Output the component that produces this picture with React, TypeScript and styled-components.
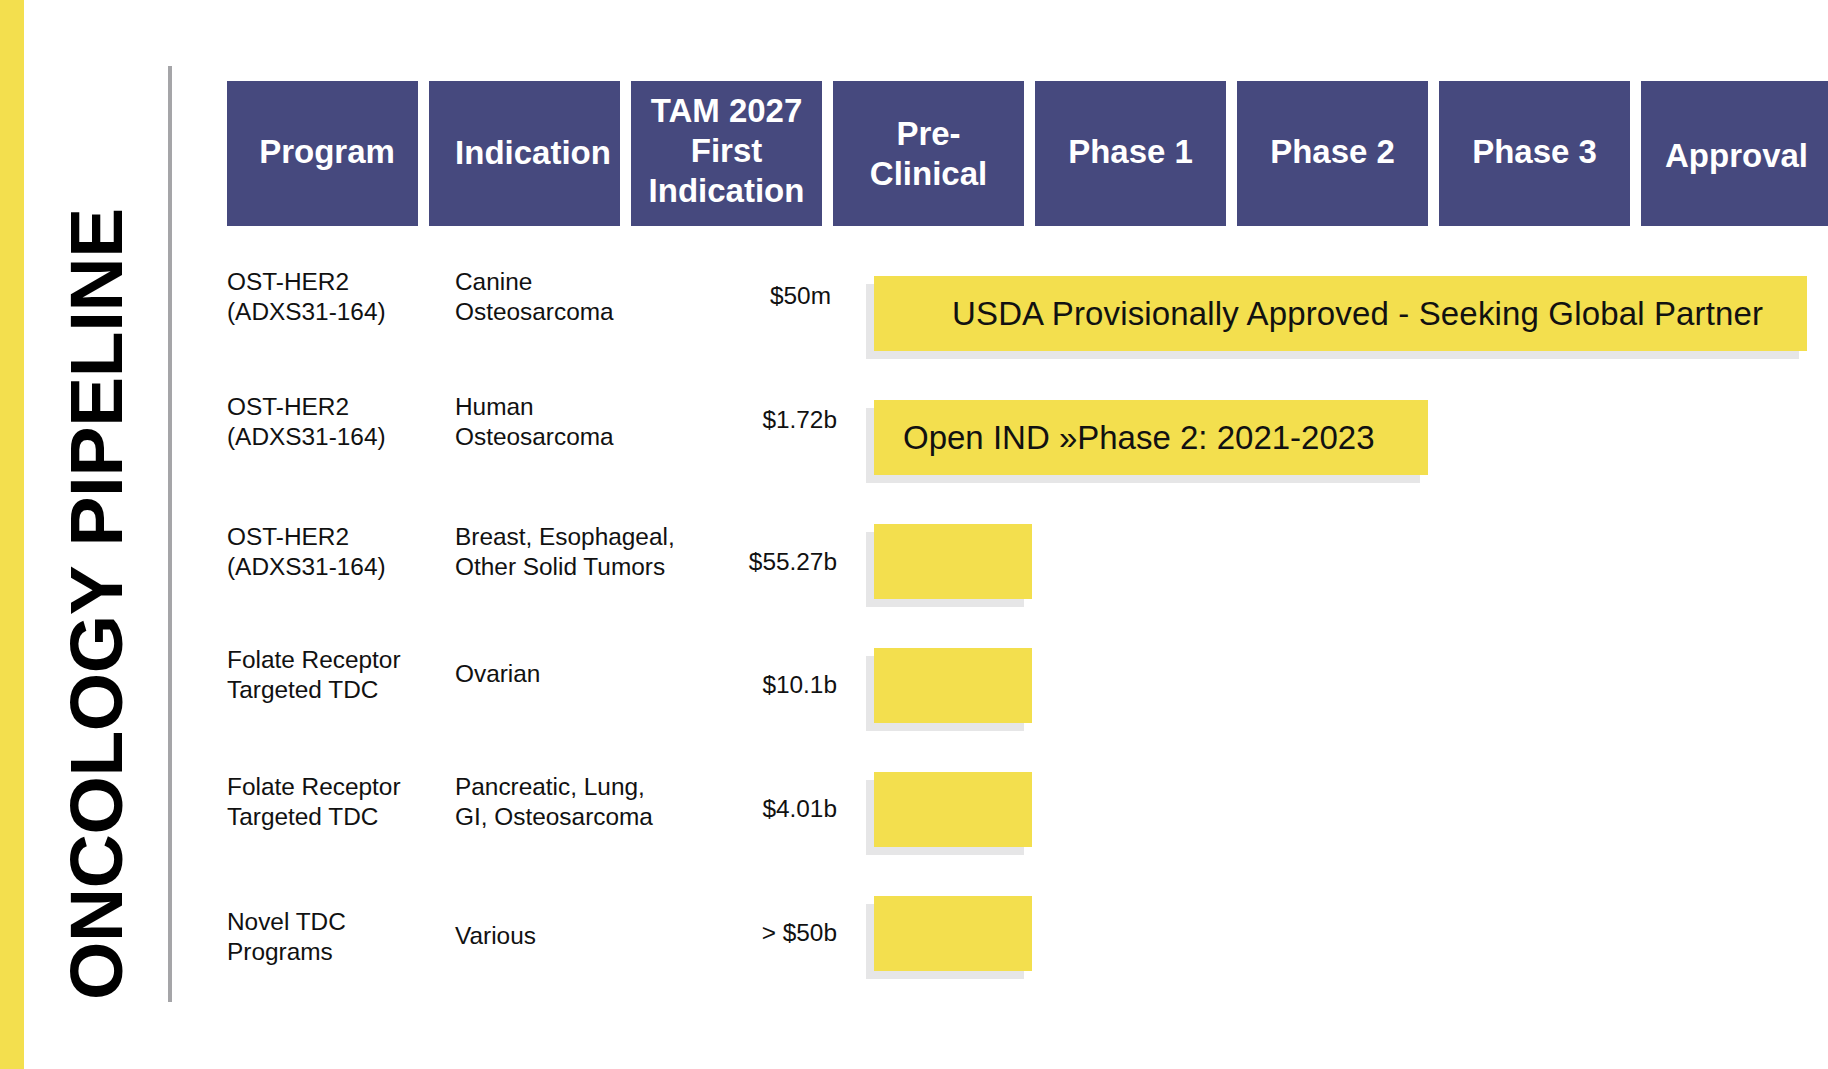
import styled, { createGlobalStyle } from "styled-components";

const GlobalStyle = createGlobalStyle`
  html, body {
    margin: 0;
    padding: 0;
    background: #ffffff;
  }
  body {
    font-family: "Liberation Sans", Arial, Helvetica, sans-serif;
    color: #111111;
  }
`;

const YELLOW = "#f3df4e";
const NAVY = "#46497e";

const Page = styled.div`
  width: 1828px;
  height: 1069px;
  display: flex;
  overflow: hidden;
  background: #ffffff;
`;

const Strip = styled.div`
  width: 24px;
  flex-shrink: 0;
  background: ${YELLOW};
`;

const TitleCol = styled.div`
  width: 144px;
  flex-shrink: 0;
  display: flex;
  align-items: flex-end;
  justify-content: center;
  padding-bottom: 69px;
  box-sizing: border-box;
`;

const Title = styled.h1`
  margin: 0;
  writing-mode: vertical-rl;
  transform: rotate(180deg);
  font-size: 75px;
  line-height: 75px;
  font-weight: 700;
  letter-spacing: -0.4px;
  color: #000000;
  white-space: nowrap;
`;

const Divider = styled.div`
  width: 4px;
  flex-shrink: 0;
  margin-top: 66px;
  height: 936px;
  background: #a5a5a8;
`;

const Main = styled.div`
  flex: 1;
  padding: 81px 0 0 55px;
  display: flex;
  flex-direction: column;
  gap: 40px;
`;

const HeaderRow = styled.div`
  display: flex;
  gap: 11px;
`;

const HeadCell = styled.div<{ $dy?: number; $dx?: number }>`
  width: 191px;
  height: 145px;
  flex-shrink: 0;
  box-sizing: border-box;
  padding-top: ${(p) => Math.max((p.$dy ?? 0) * 2, 0)}px;
  padding-bottom: ${(p) => Math.max(-(p.$dy ?? 0) * 2, 0)}px;
  padding-left: ${(p) => (p.$dx ?? 0) * 2}px;
  background: ${NAVY};
  color: #ffffff;
  font-size: 33px;
  font-weight: 700;
  line-height: 40px;
  display: flex;
  align-items: center;
  justify-content: center;
  text-align: center;
  white-space: nowrap;
`;

const Rows = styled.div`
  display: flex;
  flex-direction: column;
`;

const Row = styled.div`
  height: 124px;
  display: grid;
  grid-template-columns: 228px 220px 162px 1fr;
  align-items: start;
`;

const Cell = styled.div<{ $top: number; $right?: boolean; $pr?: number }>`
  margin-top: ${(p) => p.$top}px;
  padding-right: ${(p) => p.$pr ?? 0}px;
  font-size: 24.4px;
  line-height: 30px;
  white-space: nowrap;
  text-align: ${(p) => (p.$right ? "right" : "left")};
`;

const Bar = styled.div<{ $width: number; $pad: number; $track: number }>`
  margin: 10px 0 0 37px;
  width: ${(p) => p.$width}px;
  height: 75px;
  box-sizing: border-box;
  padding-left: ${(p) => p.$pad}px;
  background: ${YELLOW};
  box-shadow: -8px 8px 0 #e6e6e7;
  display: flex;
  align-items: center;
  font-size: 33px;
  letter-spacing: ${(p) => p.$track}px;
  white-space: nowrap;
  color: #111111;
`;

type PipelineRow = {
  program: string[];
  indication: string[];
  tam: string;
  progTop: number;
  indTop: number;
  tamTop: number;
  tamPad?: number;
  bar: number;
  label?: string;
  pad?: number;
  track?: number;
};

const heads: { lines: string[]; dy?: number; dx?: number }[] = [
  { lines: ["Program"], dy: -2, dx: 4.5 },
  { lines: ["Indication"], dy: -1, dx: 8.5 },
  { lines: ["TAM 2027", "First", "Indication"], dy: -2.5 },
  { lines: ["Pre-", "Clinical"] },
  { lines: ["Phase 1"], dy: -2 },
  { lines: ["Phase 2"], dy: -2 },
  { lines: ["Phase 3"], dy: -2 },
  { lines: ["Approval"], dy: 2.5 },
];

const rows: PipelineRow[] = [
  {
    program: ["OST-HER2", "(ADXS31-164)"],
    indication: ["Canine", "Osteosarcoma"],
    tam: "$50m",
    progTop: 1,
    indTop: 1,
    tamTop: 15,
    tamPad: 6,
    bar: 933,
    label: "USDA Provisionally Approved - Seeking Global Partner",
    pad: 78,
    track: 0.15,
  },
  {
    program: ["OST-HER2", "(ADXS31-164)"],
    indication: ["Human", "Osteosarcoma"],
    tam: "$1.72b",
    progTop: 2,
    indTop: 2,
    tamTop: 15,
    bar: 554,
    label: "Open IND »Phase 2: 2021-2023",
    pad: 29,
  },
  {
    program: ["OST-HER2", "(ADXS31-164)"],
    indication: ["Breast, Esophageal,", "Other Solid Tumors"],
    tam: "$55.27b",
    progTop: 8,
    indTop: 8,
    tamTop: 33,
    bar: 158,
  },
  {
    program: ["Folate Receptor", "Targeted TDC"],
    indication: ["Ovarian"],
    tam: "$10.1b",
    progTop: 7,
    indTop: 21,
    tamTop: 32,
    bar: 158,
  },
  {
    program: ["Folate Receptor", "Targeted TDC"],
    indication: ["Pancreatic, Lung,", "GI, Osteosarcoma"],
    tam: "$4.01b",
    progTop: 10,
    indTop: 10,
    tamTop: 32,
    bar: 158,
  },
  {
    program: ["Novel TDC", "Programs"],
    indication: ["Various"],
    tam: "> $50b",
    progTop: 21,
    indTop: 35,
    tamTop: 32,
    bar: 158,
  },
];

function Lines({ items }: { items: string[] }) {
  return (
    <>
      {items.map((line, i) => (
        <div key={i}>{line}</div>
      ))}
    </>
  );
}

export default function App() {
  return (
    <>
      <GlobalStyle />
      <Page>
        <Strip />
        <TitleCol>
          <Title>ONCOLOGY PIPELINE</Title>
        </TitleCol>
        <Divider />
        <Main>
          <HeaderRow>
            {heads.map((h, i) => (
              <HeadCell key={i} $dy={h.dy} $dx={h.dx}>
                <div>
                  <Lines items={h.lines} />
                </div>
              </HeadCell>
            ))}
          </HeaderRow>
          <Rows>
            {rows.map((r, i) => (
              <Row key={i}>
                <Cell $top={r.progTop}>
                  <Lines items={r.program} />
                </Cell>
                <Cell $top={r.indTop}>
                  <Lines items={r.indication} />
                </Cell>
                <Cell $top={r.tamTop} $pr={r.tamPad} $right>
                  {r.tam}
                </Cell>
                <Bar $width={r.bar} $pad={r.pad ?? 0} $track={r.track ?? 0}>
                  {r.label}
                </Bar>
              </Row>
            ))}
          </Rows>
        </Main>
      </Page>
    </>
  );
}
